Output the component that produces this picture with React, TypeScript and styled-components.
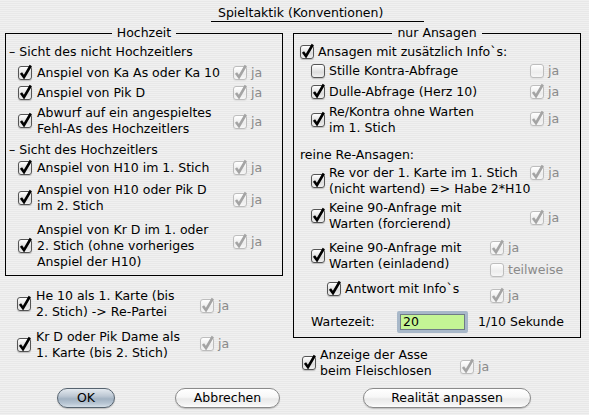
import React from 'react';
import styled, { createGlobalStyle } from 'styled-components';

const GlobalStyle = createGlobalStyle`
  html, body {
    margin: 0;
    padding: 0;
  }
  body {
    font-family: "DejaVu Sans", "Liberation Sans", sans-serif;
  }
`;

const Window = styled.div`
  width: 589px;
  height: 415px;
  box-sizing: border-box;
  overflow: hidden;
  padding: 5px 0 0 5px;
  background: repeating-linear-gradient(
    to bottom,
    #f0f0f0 0,
    #f0f0f0 1px,
    #e8e8e8 1px,
    #e8e8e8 2px
  );
  font-family: "DejaVu Sans", "Liberation Sans", sans-serif;
  font-size: 12.5px;
  line-height: 16px;
  color: #000;
`;

const Title = styled.div`
  margin-left: 206px;
  width: 206px;
  height: 16px;
  padding-left: 7px;
  box-sizing: content-box;
  border-bottom: 1px solid #000;
  white-space: nowrap;
`;

const Columns = styled.div`
  margin-top: 3px;
  display: grid;
  grid-template-columns: 278px 288px;
  column-gap: 10px;
  align-items: start;
`;

const Column = styled.div`
  display: flex;
  flex-direction: column;
`;

const Group = styled.fieldset<{ $pb: number }>`
  margin: 0;
  min-width: 0;
  padding: 3px 0 ${(p) => p.$pb}px 0;
  border: 1px solid #000;
`;

const Legend = styled.legend`
  margin: 0 auto;
  padding: 0 5px;
  line-height: 16px;
`;

const Heading = styled.div<{ $top?: number; $indent: number }>`
  margin-top: ${(p) => p.$top ?? 0}px;
  padding-left: ${(p) => p.$indent}px;
  white-space: nowrap;
`;

const Option = styled.div<{ $indent: number; $tail: number; $top?: number }>`
  display: grid;
  grid-template-columns: 1fr ${(p) => p.$tail}px;
  align-items: start;
  padding-left: ${(p) => p.$indent}px;
  margin-top: ${(p) => p.$top ?? 0}px;
`;

const Main = styled.label<{ $gap?: number }>`
  display: flex;
  align-items: center;
  gap: ${(p) => p.$gap ?? 5}px;
  white-space: nowrap;
`;

const Tail = styled.div<{ $dy?: number }>`
  display: flex;
  flex-direction: column;
  gap: 6px;
  margin-top: ${(p) => p.$dy ?? 0}px;
`;

const Box = styled.span<{ $disabled?: boolean }>`
  position: relative;
  flex: none;
  width: 14px;
  height: 14px;
  box-sizing: border-box;
  border: 1px solid ${(p) => (p.$disabled ? '#bdbdbd' : '#555')};
  border-radius: 3px;
  background: ${(p) =>
    p.$disabled
      ? 'linear-gradient(to bottom, #ffffff, #ededed 60%, #f7f7f7)'
      : 'linear-gradient(to bottom, #ffffff, #dcdcdc 60%, #f0f0f0)'};
  box-shadow: 0 1px 1px rgba(0, 0, 0, ${(p) => (p.$disabled ? 0.06 : 0.2)});
`;

const Tick = styled.svg<{ $disabled?: boolean }>`
  position: absolute;
  left: -1px;
  top: -1px;
  width: 14px;
  height: 14px;
  overflow: visible;
  fill: none;
  stroke: ${(p) => (p.$disabled ? '#a4a4a4' : '#000')};
  stroke-width: 2.6;
`;

const JaItem = styled.span`
  display: flex;
  align-items: center;
  gap: 4px;
  height: 16px;
  color: #8a8a8a;
`;

const WaitRow = styled.div`
  margin-top: 7px;
  padding-left: 17px;
  display: grid;
  grid-template-columns: 76px 71px auto;
  column-gap: 10px;
  align-items: center;
  height: 22px;
`;

const Field = styled.div`
  height: 22px;
  box-sizing: border-box;
  border: 3px solid #a8b8c9;
  border-radius: 2px;
  display: flex;
  align-items: center;
`;

const FieldInner = styled.div`
  flex: 1;
  height: 16px;
  box-sizing: border-box;
  border: 1px solid #6f7b87;
  background: #c4f595;
  padding-left: 2px;
  line-height: 14px;
`;

const Footer = styled.div`
  margin-top: 9px;
  display: grid;
  grid-template-columns: 278px 288px;
  column-gap: 10px;
`;

const ButtonGroup = styled.div<{ $indent: number; $gap?: number }>`
  display: flex;
  gap: ${(p) => p.$gap ?? 0}px;
  padding-left: ${(p) => p.$indent}px;
`;

const Button = styled.button<{ $width: number; $default?: boolean }>`
  width: ${(p) => p.$width}px;
  height: 20px;
  padding: 0;
  border-radius: 10px;
  font-family: inherit;
  font-size: 12.5px;
  line-height: 18px;
  color: #000;
  border: 1px solid ${(p) => (p.$default ? '#56636f' : '#8a8a8a')};
  background: ${(p) =>
    p.$default
      ? 'linear-gradient(to bottom, #e3e9ef 0%, #bcc7d3 40%, #a2b2c2 55%, #b7c5d3 80%, #d5dfe8 100%)'
      : 'linear-gradient(to bottom, #ffffff 0%, #f7f7f7 45%, #e9e9e9 55%, #f3f3f3 85%, #ffffff 100%)'};
  box-shadow: 0 1px 1px rgba(0, 0, 0, 0.2);
`;

type CheckProps = { checked?: boolean; disabled?: boolean };

const CheckBox = ({ checked = true, disabled }: CheckProps) => (
  <Box $disabled={disabled}>
    {checked && (
      <Tick viewBox="0 0 14 14" $disabled={disabled}>
        <path d="M3 7 L6 11.2 L12.8 -0.5" />
      </Tick>
    )}
  </Box>
);

const Ja = ({ checked = true, label = 'ja' }: { checked?: boolean; label?: string }) => (
  <JaItem>
    <CheckBox checked={checked} disabled />
    <span>{label}</span>
  </JaItem>
);

export default function App() {
  return (
    <Window>
      <GlobalStyle />
      <Title>Spieltaktik (Konventionen)</Title>
      <Columns>
        <Column>
          <Group $pb={5}>
            <Legend>Hochzeit</Legend>
            <Heading $indent={3}>– Sicht des nicht Hochzeitlers</Heading>
            <Option $indent={12} $tail={49} $top={5}>
              <Main>
                <CheckBox />
                <span>Anspiel von Ka As oder Ka 10</span>
              </Main>
              <Tail>
                <Ja />
              </Tail>
            </Option>
            <Option $indent={12} $tail={49} $top={4}>
              <Main>
                <CheckBox />
                <span>Anspiel von Pik D</span>
              </Main>
              <Tail>
                <Ja />
              </Tail>
            </Option>
            <Option $indent={12} $tail={49} $top={4}>
              <Main>
                <CheckBox />
                <span>
                  Abwurf auf ein angespieltes
                  <br />
                  Fehl-As des Hochzeitlers
                </span>
              </Main>
              <Tail $dy={9}>
                <Ja />
              </Tail>
            </Option>
            <Heading $indent={3} $top={5}>
              – Sicht des Hochzeitlers
            </Heading>
            <Option $indent={12} $tail={49} $top={2}>
              <Main>
                <CheckBox />
                <span>Anspiel von H10 im 1. Stich</span>
              </Main>
              <Tail>
                <Ja />
              </Tail>
            </Option>
            <Option $indent={12} $tail={49} $top={6}>
              <Main>
                <CheckBox />
                <span>
                  Anspiel von H10 oder Pik D
                  <br />
                  im 2. Stich
                </span>
              </Main>
              <Tail $dy={10}>
                <Ja />
              </Tail>
            </Option>
            <Option $indent={12} $tail={49} $top={8}>
              <Main>
                <CheckBox />
                <span>
                  Anspiel von Kr D im 1. oder
                  <br />
                  2. Stich (ohne vorheriges
                  <br />
                  Anspiel der H10)
                </span>
              </Main>
              <Tail $dy={12}>
                <Ja />
              </Tail>
            </Option>
          </Group>
          <Option $indent={12} $tail={83} $top={12}>
            <Main>
              <CheckBox />
              <span>
                He 10 als 1. Karte (bis
                <br />
                2. Stich) -&gt; Re-Partei
              </span>
            </Main>
            <Tail $dy={10}>
              <Ja />
            </Tail>
          </Option>
          <Option $indent={12} $tail={83} $top={9}>
            <Main>
              <CheckBox />
              <span>
                Kr D oder Pik Dame als
                <br />
                1. Karte (bis 2. Stich)
              </span>
            </Main>
            <Tail $dy={7}>
              <Ja />
            </Tail>
          </Option>
        </Column>

        <Column>
          <Group $pb={4}>
            <Legend>nur Ansagen</Legend>
            <Option $indent={6} $tail={50}>
              <Main $gap={4}>
                <CheckBox />
                <span>Ansagen mit zusätzlich Info`s:</span>
              </Main>
            </Option>
            <Option $indent={17} $tail={50} $top={3}>
              <Main $gap={4}>
                <CheckBox checked={false} />
                <span>Stille Kontra-Abfrage</span>
              </Main>
              <Tail>
                <Ja checked={false} />
              </Tail>
            </Option>
            <Option $indent={17} $tail={50} $top={5}>
              <Main $gap={4}>
                <CheckBox />
                <span>Dulle-Abfrage (Herz 10)</span>
              </Main>
              <Tail>
                <Ja />
              </Tail>
            </Option>
            <Option $indent={17} $tail={50} $top={4}>
              <Main $gap={4}>
                <CheckBox />
                <span>
                  Re/Kontra ohne Warten
                  <br />
                  im 1. Stich
                </span>
              </Main>
              <Tail $dy={7}>
                <Ja />
              </Tail>
            </Option>
            <Heading $indent={6} $top={11}>
              reine Re-Ansagen:
            </Heading>
            <Option $indent={17} $tail={50} $top={2}>
              <Main $gap={4}>
                <CheckBox />
                <span>
                  Re vor der 1. Karte im 1. Stich
                  <br />
                  (nicht wartend) =&gt; Habe 2*H10
                </span>
              </Main>
              <Tail>
                <Ja />
              </Tail>
            </Option>
            <Option $indent={17} $tail={50} $top={3}>
              <Main $gap={4}>
                <CheckBox />
                <span>
                  Keine 90-Anfrage mit
                  <br />
                  Warten (forcierend)
                </span>
              </Main>
              <Tail $dy={10}>
                <Ja />
              </Tail>
            </Option>
            <Option $indent={17} $tail={90} $top={8}>
              <Main $gap={4}>
                <CheckBox />
                <span>
                  Keine 90-Anfrage mit
                  <br />
                  Warten (einladend)
                </span>
              </Main>
              <Tail>
                <Ja />
                <Ja checked={false} label="teilweise" />
              </Tail>
            </Option>
            <Option $indent={33} $tail={90} $top={3}>
              <Main $gap={4}>
                <CheckBox />
                <span>Antwort mit Info`s</span>
              </Main>
              <Tail $dy={7}>
                <Ja />
              </Tail>
            </Option>
            <WaitRow>
              <span>Wartezeit:</span>
              <Field>
                <FieldInner>20</FieldInner>
              </Field>
              <span>1/10 Sekunde</span>
            </WaitRow>
          </Group>
          <Option $indent={9} $tail={121} $top={9}>
            <Main $gap={4}>
              <CheckBox />
              <span>
                Anzeige der Asse
                <br />
                beim Fleischlosen
              </span>
            </Main>
            <Tail $dy={12}>
              <Ja />
            </Tail>
          </Option>
        </Column>
      </Columns>

      <Footer>
        <ButtonGroup $indent={52} $gap={60}>
          <Button $width={58} $default>
            OK
          </Button>
          <Button $width={105}>Abbrechen</Button>
        </ButtonGroup>
        <ButtonGroup $indent={70}>
          <Button $width={168}>Realität anpassen</Button>
        </ButtonGroup>
      </Footer>
    </Window>
  );
}
